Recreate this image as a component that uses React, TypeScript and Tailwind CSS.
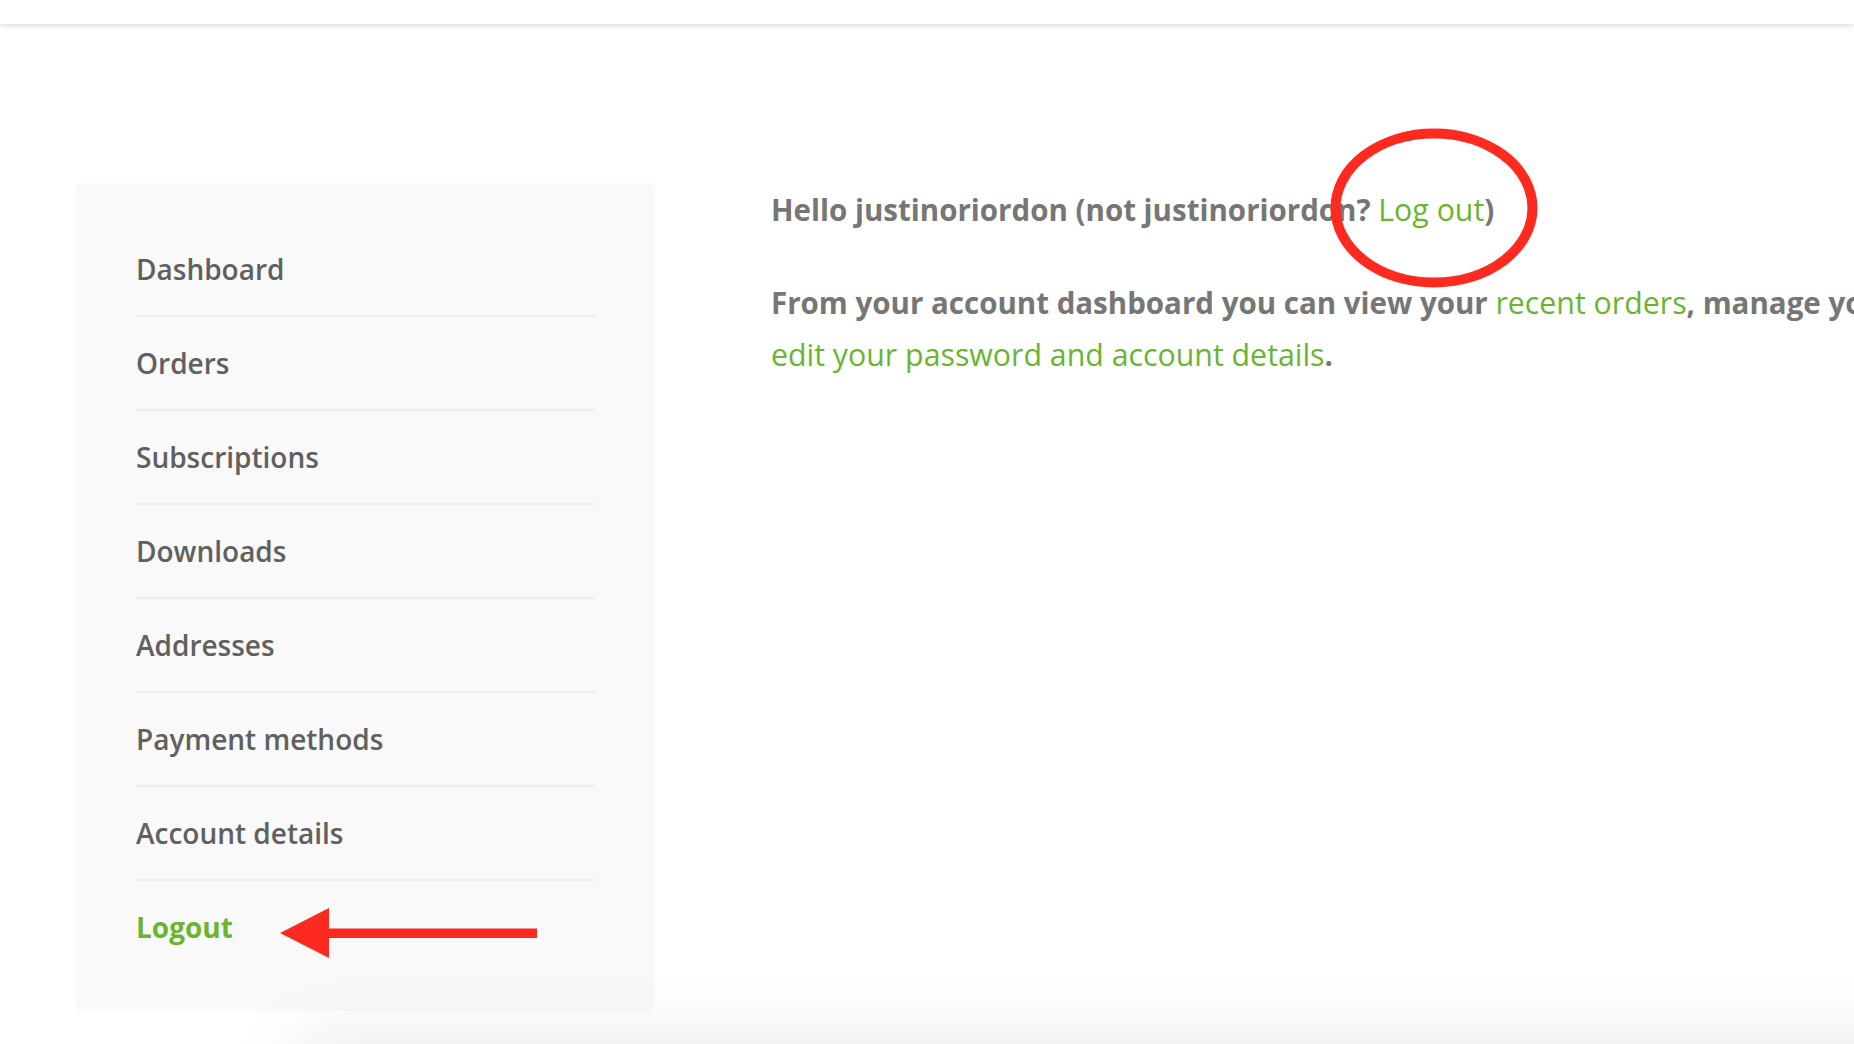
const navItems = [
  'Dashboard',
  'Orders',
  'Subscriptions',
  'Downloads',
  'Addresses',
  'Payment methods',
  'Account details',
];

const App = () => {
  return (
    <div className="relative min-h-screen overflow-hidden bg-white font-['Open_Sans',sans-serif]">
      <header className="relative z-10 h-6 bg-white shadow-[0_2px_5px_rgba(0,0,0,0.13)]" />

      <main className="flex items-start pl-[76px] pt-[159px]">
        <nav className="w-[579px] shrink-0 rounded-md bg-[#f9f9f9] px-[60px] pt-[40px] pb-[38px]">
          <ul>
            {navItems.map((item) => (
              <li key={item} className="border-b-2 border-[#ededed]">
                <a href="#" className="block py-[25px] text-[28px] leading-[42px] font-semibold text-[#606060]">
                  {item}
                </a>
              </li>
            ))}
            <li>
              <a href="#" className="block py-[25px] text-[28px] leading-[42px] font-bold text-[#6ab42f]">
                Logout
              </a>
            </li>
          </ul>
        </nav>

        <section className="ml-[116px] mt-px w-[2400px] shrink-0 text-[29.5px] leading-[52px] font-bold text-[#767676]">
          <p className="mb-[41px]">
            Hello justinoriordon (not justinoriordon?{' '}
            <a href="#" className="text-[30.3px] font-normal text-[#6ab42f]">Log out</a>)
          </p>
          <p>
            From your account dashboard you can view your{' '}
            <a href="#" className="text-[30.3px] font-normal text-[#6ab42f]">recent orders</a>, manage your{' '}
            <a href="#" className="text-[30.3px] font-normal text-[#6ab42f]">shipping and billing addresses</a>, and
            <br />
            <a href="#" className="text-[30.3px] font-normal text-[#6ab42f]">edit your password and account details</a>.
          </p>
        </section>
      </main>

      {/* annotation: circle round "Log out" */}
      <svg className="absolute left-[1330px] top-[128px]" width="208" height="160" viewBox="0 0 208 160">
        <ellipse cx="104" cy="80" rx="98.5" ry="74.5" fill="none" stroke="#fd2a20" strokeWidth="10" />
      </svg>

      {/* annotation: arrow pointing at Logout */}
      <svg className="absolute left-[280px] top-[908px]" width="257" height="50" viewBox="0 0 257 50">
        <polygon points="0,25 49,0 49,50" fill="#fd2a20" />
        <rect x="48" y="20.5" width="209" height="9.5" fill="#fd2a20" />
      </svg>

      <div className="fixed left-[300px] right-[-100px] top-[1044px] h-[200px] shadow-[0_0_80px_rgba(0,0,0,0.1)]" />
    </div>
  );
};

export default App;
